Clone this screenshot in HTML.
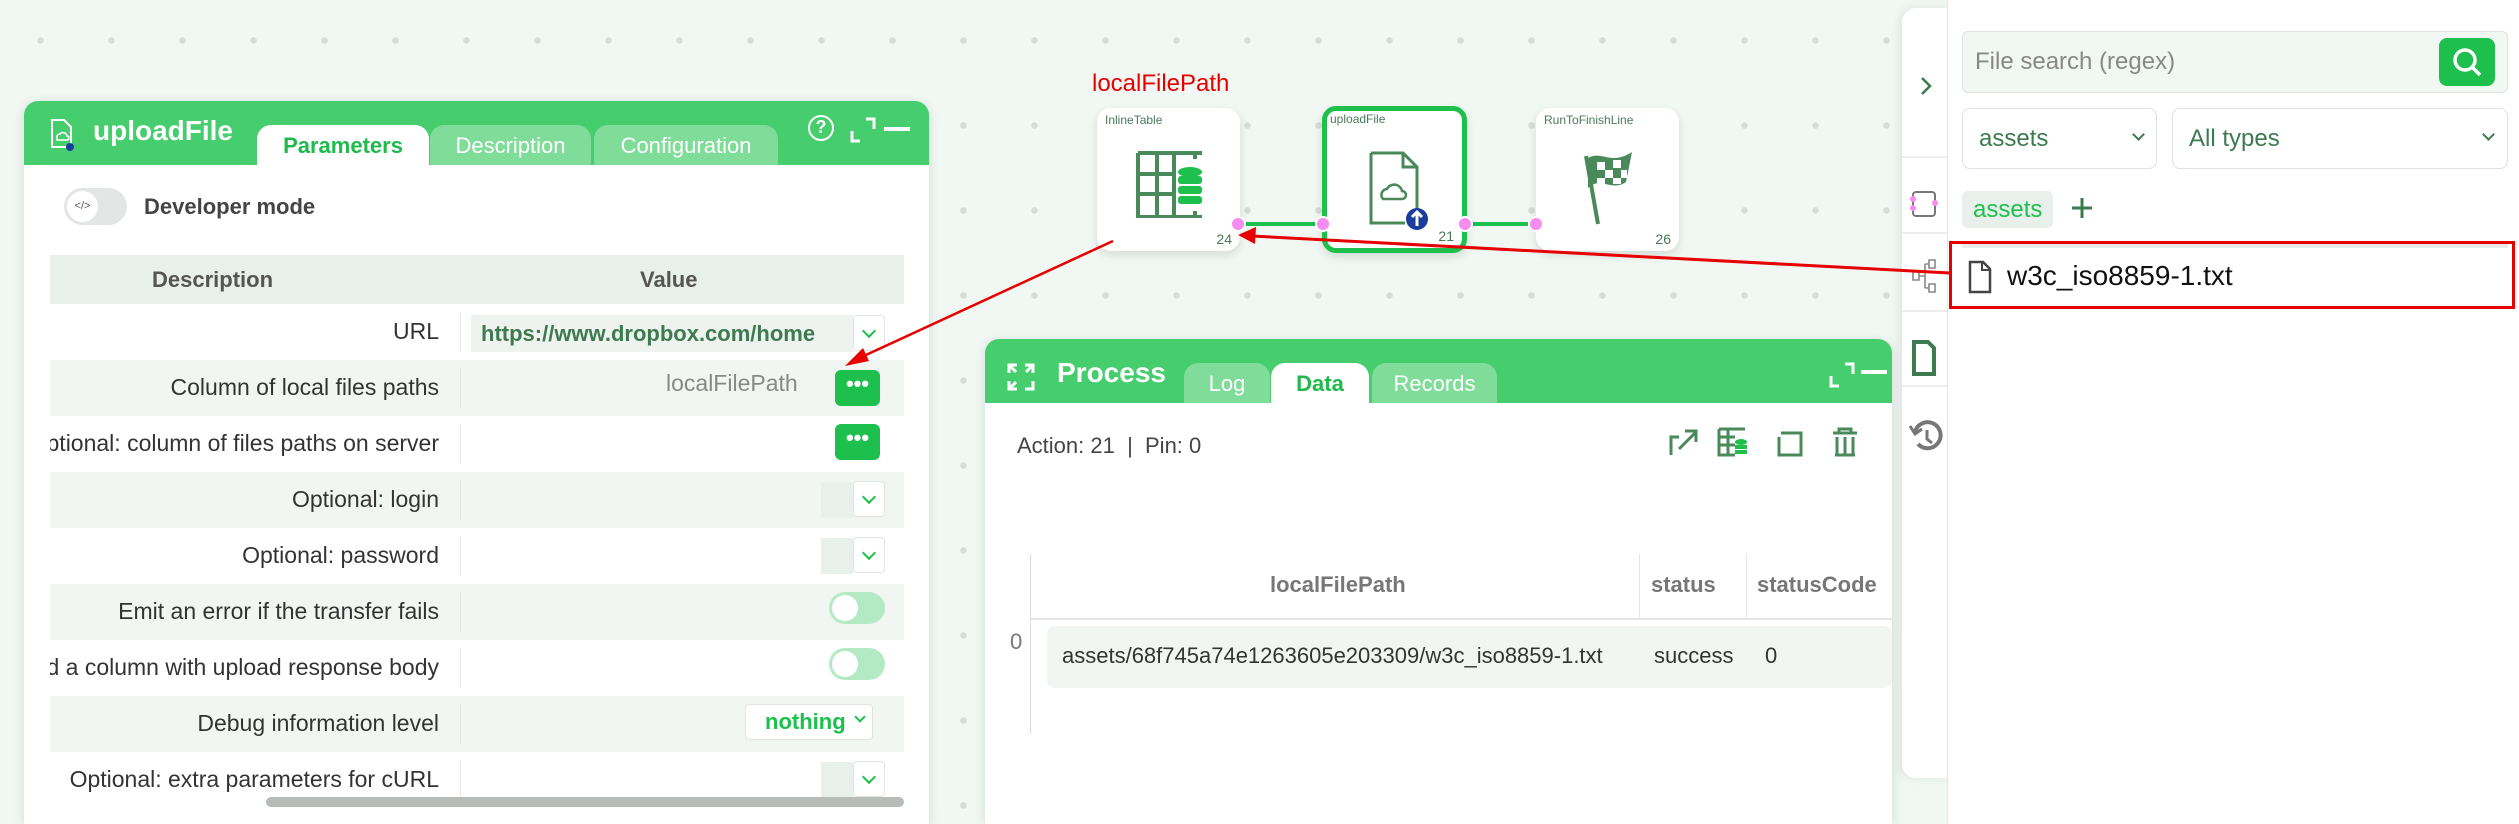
<!DOCTYPE html>
<html style="overflow:hidden;width:2519px;height:824px"><head><meta charset="utf-8">
<style>
*{box-sizing:border-box;margin:0;padding:0}
body{width:2519px;height:824px;overflow:hidden;position:relative;font-family:"Liberation Sans",sans-serif;background:#f1f8f3;
background-image:radial-gradient(circle,#d6dcd8 3px,transparent 3.5px);background-size:71px 85px;background-position:5px -2px}
.abs{position:absolute}
.panel{position:absolute;background:#fff;border-radius:14px 14px 0 0;box-shadow:0 2px 12px rgba(0,0,0,.12);overflow:hidden}
.hdr{position:absolute;left:0;top:0;right:0;background:#46cd6e}
.tab{position:absolute;border-radius:14px 14px 0 0;background:#7fdc99;color:#fff;font-size:22px;text-align:center}
.tab.on{background:#fff;color:#1fb94c;font-weight:bold}
.row{position:absolute;left:50px;width:854px;height:56px;font-size:23px;color:#333;overflow:hidden}
.row .d{position:absolute;right:465px;top:14px;white-space:nowrap}
.row .sep{position:absolute;left:410px;top:8px;width:1px;height:40px;background:#e3e8e5}
.alt{background:#f2f6f3}
.dots{position:absolute;width:45px;height:36px;background:#1dbf4d;border-radius:6px;color:#fff;font-weight:bold;font-size:22px;text-align:center;line-height:28px}
.dd{position:absolute;width:32px;height:36px;border:1px solid #dfe5e1;background:#fff;border-radius:4px}
.dd:after{content:"";position:absolute;left:10px;top:10px;width:8px;height:8px;border-right:2px solid #1dbf4d;border-bottom:2px solid #1dbf4d;transform:rotate(45deg)}
.gbox{position:absolute;width:32px;height:36px;background:#e9efeb}
.tog{position:absolute;width:56px;height:32px;border-radius:16px;background:#b4eac3}
.tog:after{content:"";position:absolute;left:3px;top:3px;width:26px;height:26px;border-radius:50%;background:#fff}
.node{position:absolute;width:143px;height:143px;background:#fff;border-radius:14px;box-shadow:0 4px 10px rgba(0,0,0,.12)}
.node .t{position:absolute;left:8px;top:5px;font-size:12px;color:#4a7a58}
.node .n{position:absolute;right:8px;bottom:4px;font-size:14px;color:#4a7a58}
.port{position:absolute;width:16px;height:16px;border-radius:50%;background:#f58cf0;border:2px solid #fff}
</style></head><body>

<!-- left panel -->
<div class="panel" style="left:24px;top:101px;width:905px;height:723px">
 <div class="hdr" style="height:64px"></div>
 <svg class="abs" style="left:24px;top:17px" width="28" height="34" viewBox="0 0 28 34"><path d="M4 2h12l7 7v20H4z" fill="none" stroke="#fff" stroke-width="2"/><path d="M9 20a3 3 0 0 1 3-4 4 4 0 0 1 7 2 2 2 0 0 1 0 4h-10z" fill="none" stroke="#fff" stroke-width="1.5"/><circle cx="22" cy="29" r="4" fill="#1a3d9c"/></svg>
 <div class="abs" style="left:69px;top:14px;font-size:28px;font-weight:bold;color:#fff">uploadFile</div>
 <div class="tab on" style="left:233px;top:24px;width:172px;height:42px;line-height:42px">Parameters</div>
 <div class="tab" style="left:406px;top:24px;width:161px;height:40px;line-height:42px">Description</div>
 <div class="tab" style="left:570px;top:24px;width:184px;height:40px;line-height:42px">Configuration</div>
 <div class="abs" style="left:784px;top:14px;width:26px;height:26px;border:2.5px solid #fff;border-radius:50%;color:#fff;font-size:18px;font-weight:bold;text-align:center;line-height:21px">?</div>
 <svg class="abs" style="left:826px;top:16px" width="26" height="26"><path d="M2 14v10h8M16 2h8v10" fill="none" stroke="#fff" stroke-width="3"/></svg>
 <div class="abs" style="left:860px;top:26px;width:26px;height:4px;background:#fff"></div>
 <div class="abs" style="left:40px;top:87px;width:63px;height:37px;border-radius:19px;background:#e3e6e4"></div>
 <div class="abs" style="left:43px;top:90px;width:31px;height:31px;border-radius:50%;background:#fff;font-size:11px;text-align:center;line-height:31px;color:#555">&lt;/&gt;</div>
 <div class="abs" style="left:120px;top:93px;font-size:22px;font-weight:bold;color:#444">Developer mode</div>
</div>
<!-- table -->
<div class="abs" style="left:50px;top:255px;width:854px;height:49px;background:#e9efeb;font-size:22px;font-weight:bold;color:#555">
 <div class="abs" style="left:102px;top:12px">Description</div>
 <div class="abs" style="left:590px;top:12px">Value</div>
</div>
<div class="row" style="top:304px"><div class="d">URL</div><div class="sep"></div>
 <div class="abs" style="left:421px;top:11px;width:382px;height:37px;background:#eef3f0;color:#3d7a4f;font-weight:bold;font-size:22px;padding:6px 0 0 10px;white-space:nowrap">https://www.dropbox.com/home</div>
 <div class="dd" style="left:803px;top:11px"></div></div>
<div class="row alt" style="top:360px"><div class="d">Column of local files paths</div><div class="sep"></div>
 <div class="abs" style="left:616px;top:10px;color:#888">localFilePath</div>
 <div class="dots" style="left:785px;top:10px">•••</div></div>
<div class="row" style="top:416px"><div class="d" style="right:465px">Optional: column of files paths on server</div><div class="sep"></div>
 <div class="dots" style="left:785px;top:8px">•••</div></div>
<div class="row alt" style="top:472px"><div class="d">Optional: login</div><div class="sep"></div><div class="gbox" style="left:771px;top:10px"></div><div class="dd" style="left:803px;top:9px"></div></div>
<div class="row" style="top:528px"><div class="d">Optional: password</div><div class="sep"></div><div class="gbox" style="left:771px;top:10px"></div><div class="dd" style="left:803px;top:9px"></div></div>
<div class="row alt" style="top:584px"><div class="d">Emit an error if the transfer fails</div><div class="sep"></div><div class="tog" style="left:779px;top:8px"></div></div>
<div class="row" style="top:640px"><div class="d">Add a column with upload response body</div><div class="sep"></div><div class="tog" style="left:779px;top:8px"></div></div>
<div class="row alt" style="top:696px"><div class="d">Debug information level</div><div class="sep"></div>
 <div class="abs" style="left:695px;top:8px;width:128px;height:36px;background:#fff;border:1px solid #dfe5e1;border-radius:4px;color:#1dbf4d;font-weight:bold;font-size:22px;padding:4px 0 0 19px">nothing</div>
 <div class="abs" style="left:806px;top:17px;width:8px;height:8px;border-right:2px solid #1dbf4d;border-bottom:2px solid #1dbf4d;transform:rotate(45deg)"></div></div>
<div class="row" style="top:752px"><div class="d">Optional: extra parameters for cURL</div><div class="sep"></div><div class="gbox" style="left:771px;top:10px"></div><div class="dd" style="left:803px;top:9px"></div></div>
<div class="abs" style="left:266px;top:797px;width:638px;height:10px;border-radius:5px;background:#b8bcb9"></div>

<!-- nodes -->
<div class="abs" style="left:1092px;top:70px;font-size:24px;color:#e60000">localFilePath</div>
<div class="abs" style="left:1238px;top:222px;width:88px;height:4px;background:#1dbf4d"></div>
<div class="abs" style="left:1465px;top:222px;width:75px;height:4px;background:#1dbf4d"></div>
<div class="node" style="left:1097px;top:108px"><div class="t">InlineTable</div><div class="n">24</div>
 <svg class="abs" style="left:38px;top:42px" width="68" height="68" viewBox="0 0 68 68"><path d="M3 3h64M3 3v64h64M3 24h36M3 44h36M22 3v64M39 3v64M60 3v6M60 61v6" fill="none" stroke="#4a8a5a" stroke-width="4"/><ellipse cx="55" cy="22" rx="12" ry="5" fill="#1dbf4d"/><rect x="43" y="26" width="24" height="8" rx="3" fill="#1dbf4d"/><rect x="43" y="36" width="24" height="8" rx="3" fill="#1dbf4d"/><rect x="43" y="46" width="24" height="8" rx="3" fill="#1dbf4d"/></svg></div>
<div class="node" style="left:1322px;top:106px;border:5px solid #1dbf4d;height:147px;width:145px"><div class="t" style="left:3px;top:1px">uploadFile</div><div class="n">21</div>
 <svg class="abs" style="left:42px;top:40px" width="60" height="80" viewBox="0 0 60 80"><path d="M2 2h32l14 14v56M36 72H2V2M34 2v14h14" fill="none" stroke="#4a8a5a" stroke-width="3"/><path d="M14 48a6 6 0 0 1 4-10 8 8 0 0 1 15 2 4 4 0 0 1 0 8z" fill="none" stroke="#4a8a5a" stroke-width="2.5"/><circle cx="48" cy="68" r="11" fill="#1a3d9c"/><path d="M48 75v-13M43 66l5-5 5 5" stroke="#fff" stroke-width="3" fill="none"/></svg></div>
<div class="node" style="left:1536px;top:108px"><div class="t">RunToFinishLine</div><div class="n">26</div>
 <svg class="abs" style="left:44px;top:40px" width="60" height="80" viewBox="0 0 60 80"><path d="M6 8l12 68" stroke="#4a8a5a" stroke-width="4"/><path d="M8 10c14-8 22 8 44-6l-6 30c-14 10-26-6-38 6z" fill="#4a8a5a"/><path d="M17 14h8v8h-8zM33 12h8v8h-8zM25 22h8v8h-8zM41 22h6v8h-6zM17 30h8v6h-8zM33 30h8v6h-8z" fill="#fff"/></svg></div>
<div class="port" style="left:1230px;top:216px"></div>
<div class="port" style="left:1315px;top:216px"></div>
<div class="port" style="left:1457px;top:216px"></div>
<div class="port" style="left:1528px;top:216px"></div>

<!-- process panel -->
<div class="panel" style="left:985px;top:339px;width:907px;height:485px">
 <div class="hdr" style="height:64px"></div>
 <svg class="abs" style="left:20px;top:22px" width="32" height="32"><path d="M4 12V4h8M4 4l7 7M28 12V4h-8M28 4l-7 7M4 20v8h8M4 28l7-7M28 20v8h-8" fill="none" stroke="#fff" stroke-width="3"/></svg>
 <div class="abs" style="left:72px;top:18px;font-size:28px;font-weight:bold;color:#fff">Process</div>
 <div class="tab" style="left:199px;top:24px;width:86px;height:40px;line-height:42px">Log</div>
 <div class="tab on" style="left:286px;top:24px;width:98px;height:42px;line-height:42px">Data</div>
 <div class="tab" style="left:387px;top:24px;width:125px;height:40px;line-height:42px">Records</div>
 <svg class="abs" style="left:844px;top:23px" width="26" height="26"><path d="M2 14v10h8M16 2h8v10" fill="none" stroke="#fff" stroke-width="3"/></svg>
 <div class="abs" style="left:876px;top:31px;width:26px;height:4px;background:#fff"></div>
 <div class="abs" style="left:32px;top:94px;font-size:22px;color:#444">Action: 21 &nbsp;|&nbsp; Pin: 0</div>
 <svg class="abs" style="left:684px;top:88px" width="220" height="30" viewBox="0 0 220 30">
  <g fill="none" stroke="#4a8a5a" stroke-width="3"><path d="M2 28V10h8M10 22L26 6M16 4h11v11"/><path d="M50 2h26M50 2v26h12M50 10h16M50 18h16M50 28h16M59 2v26"/><path d="M116 6h16v22h-22V12M112 6h4M110 10v18"/><path d="M164 6h24M170 6V2h12v4M168 10v18M176 10v18M184 10v18M166 28h20"/></g>
  <ellipse cx="72" cy="15" rx="6" ry="3" fill="#1dbf4d"/><rect x="66" y="18" width="12" height="4" fill="#1dbf4d"/><rect x="66" y="23" width="12" height="4" fill="#1dbf4d"/></svg>
 <div class="abs" style="left:45px;top:215px;width:1px;height:180px;background:#ddd"></div>
 <div class="abs" style="left:45px;top:279px;width:862px;height:2px;background:#e3e6e4"></div>
 <div class="abs" style="left:654px;top:215px;width:1px;height:64px;background:#e3e6e4"></div>
 <div class="abs" style="left:761px;top:215px;width:1px;height:64px;background:#e3e6e4"></div>
 <div class="abs" style="left:285px;top:233px;font-size:22px;font-weight:bold;color:#777">localFilePath</div>
 <div class="abs" style="left:666px;top:233px;font-size:22px;font-weight:bold;color:#777">status</div>
 <div class="abs" style="left:772px;top:233px;font-size:22px;font-weight:bold;color:#777">statusCode</div>
 <div class="abs" style="left:25px;top:290px;font-size:22px;color:#777">0</div>
 <div class="abs" style="left:62px;top:287px;width:845px;height:62px;background:#f2f6f3;border-radius:8px"></div>
 <div class="abs" style="left:77px;top:304px;font-size:22px;color:#333">assets/68f745a74e1263605e203309/w3c_iso8859-1.txt</div>
 <div class="abs" style="left:669px;top:304px;font-size:22px;color:#333">success</div>
 <div class="abs" style="left:780px;top:304px;font-size:22px;color:#333">0</div>
</div>

<!-- right sidebar -->
<div class="abs" style="left:1902px;top:8px;width:50px;height:770px;background:#fff;border-radius:14px 0 0 14px;box-shadow:-3px 0 10px rgba(0,0,0,.08)"></div>
<div class="abs" style="left:1947px;top:0;width:572px;height:824px;background:#fff;border-left:1px solid #e3e6e4"></div>
<svg class="abs" style="left:1902px;top:60px" width="46" height="420" viewBox="0 0 46 420">
 <path d="M20 18l8 8-8 8" fill="none" stroke="#3d7a4f" stroke-width="2.5"/>
 <line x1="0" y1="97" x2="46" y2="97" stroke="#ddd"/><line x1="0" y1="173" x2="46" y2="173" stroke="#ddd"/><line x1="0" y1="251" x2="46" y2="251" stroke="#ddd"/><line x1="0" y1="326" x2="46" y2="326" stroke="#ddd"/>
 <rect x="11" y="132" width="22" height="24" rx="3" fill="none" stroke="#777" stroke-width="2"/><circle cx="11" cy="139" r="3" fill="#f58cf0"/><circle cx="11" cy="148" r="3" fill="#f58cf0"/><circle cx="33" cy="143" r="3" fill="#f58cf0"/>
 <path d="M11 212h6v8h-6zM17 216h6M23 204v24M23 204h4M23 228h4M27 200h6v8h-6zM27 224h6v8h-6z" fill="none" stroke="#888" stroke-width="1.6"/>
 <path d="M12 282h14l6 6v26H12z" fill="none" stroke="#3d7a4f" stroke-width="4"/>
 <path d="M13 372a13 13 0 1 1 3 12" fill="none" stroke="#777" stroke-width="4"/><path d="M8 366l5 8 7-5" fill="none" stroke="#777" stroke-width="3"/><path d="M25 370v9l5 4" stroke="#777" stroke-width="3" fill="none"/>
</svg>
<div class="abs" style="left:1962px;top:31px;width:546px;height:62px;border:1px solid #dde3df;border-radius:6px;background:#f1f8f3;font-size:24px;color:#888;padding:16px 0 0 12px">File search (regex)</div>
<div class="abs" style="left:2439px;top:38px;width:56px;height:48px;border-radius:8px;background:#1dbf4d"></div>
<svg class="abs" style="left:2449px;top:44px" width="36" height="36"><circle cx="16" cy="16" r="10" fill="none" stroke="#fff" stroke-width="3.5"/><path d="M23 23l8 8" stroke="#fff" stroke-width="3.5"/></svg>
<div class="abs" style="left:1962px;top:108px;width:195px;height:61px;border:1px solid #dde3df;border-radius:8px;font-size:24px;color:#3d7a4f;padding:16px 0 0 16px">assets</div>
<div class="abs" style="left:2134px;top:130px;width:9px;height:9px;border-right:2px solid #3d7a4f;border-bottom:2px solid #3d7a4f;transform:rotate(45deg)"></div>
<div class="abs" style="left:2172px;top:108px;width:336px;height:61px;border:1px solid #dde3df;border-radius:8px;font-size:24px;color:#3d7a4f;padding:16px 0 0 16px">All types</div>
<div class="abs" style="left:2484px;top:130px;width:9px;height:9px;border-right:2px solid #3d7a4f;border-bottom:2px solid #3d7a4f;transform:rotate(45deg)"></div>
<div class="abs" style="left:1962px;top:191px;width:91px;height:37px;border-radius:6px;background:#e9efeb;font-size:24px;color:#1dbf4d;padding:5px 0 0 11px">assets</div>
<svg class="abs" style="left:2070px;top:196px" width="24" height="24"><path d="M12 2v20M2 12h20" stroke="#3d7a4f" stroke-width="3"/></svg>
<div class="abs" style="left:1962px;top:244px;width:546px;height:4px;background:#e9ebea"></div>
<svg class="abs" style="left:1968px;top:260px" width="24" height="34"><path d="M2 2h13l7 7v23H2z" fill="none" stroke="#444" stroke-width="2.5"/><path d="M14 2v8h8" fill="none" stroke="#444" stroke-width="2"/></svg>
<div class="abs" style="left:2007px;top:260px;font-size:28px;color:#111">w3c_iso8859-1.txt</div>
<div class="abs" style="left:1949px;top:241px;width:566px;height:68px;border:3px solid #e60000"></div>

<!-- arrows -->
<svg class="abs" style="left:0;top:0" width="2519" height="824">
 <line x1="1113" y1="241" x2="855" y2="360" stroke="#e60000" stroke-width="2.5"/>
 <path d="M845 366l18-18 6 13z" fill="#e60000"/>
 <line x1="1950" y1="273" x2="1252" y2="236" stroke="#e60000" stroke-width="3"/>
 <path d="M1238 235l18-8-1 17z" fill="#e60000"/>
</svg>
</body></html>
